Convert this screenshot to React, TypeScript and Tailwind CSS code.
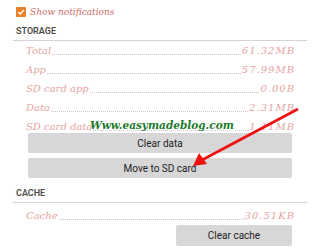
const rows = [
  { label: "Total", value: "61.32MB" },
  { label: "App", value: "57.99MB" },
  { label: "SD card app", value: "0.00B" },
  { label: "Data", value: "2.31MB" },
  { label: "SD card data", value: "1.11MB" },
]

const script = { fontFamily: "'DejaVu Serif', 'Liberation Serif', serif" }

function InfoRow({ label, value }: { label: string; value: string }) {
  return (
    <div className="flex items-center h-[19px] pl-[26px] pr-[25px] text-[10px] italic text-[#e6a3a3]" style={script}>
      <span className="leading-none">{label}</span>
      <span className="flex-1 border-b border-dotted border-[#c8c8c8] mt-[7px] mx-[1px]" />
      <span className="leading-none tracking-[1px]">{value}</span>
    </div>
  )
}

function Heading({ text }: { text: string }) {
  return (
    <div className="px-[13px]">
      <div className="pl-[3px] h-[18px] flex items-center text-[9px] font-semibold text-[#4a4a4a] border-b border-[#d4d4d4]" style={{ fontFamily: "Roboto, sans-serif" }}>
        {text}
      </div>
    </div>
  )
}

export default function App() {
  return (
    <div className="relative w-[320px] h-[252px] bg-white overflow-hidden" style={{ fontFamily: "Roboto, sans-serif" }}>
      {/* notifications checkbox */}
      <div className="flex items-center gap-[4px] pl-[16px] pt-[7px] h-[23px] items-start">
        <div className="w-[10px] h-[10px] bg-[#e8822a] rounded-[1px] flex items-center justify-center">
          <svg viewBox="0 0 10 10" className="w-[8px] h-[8px]">
            <path d="M1.5 5.2 L4 7.5 L8.5 2.5" stroke="white" strokeWidth="1.6" fill="none" />
          </svg>
        </div>
        <span className="text-[9px] leading-[10px] italic text-[#cc6b6b]" style={script}>Show notifications</span>
      </div>

      <Heading text="STORAGE" />
      <div>
        {rows.map((r) => (
          <InfoRow key={r.label} label={r.label} value={r.value} />
        ))}
      </div>

      <div className="flex flex-col gap-[5px] px-[28px] -mt-[3px]">
        <button className="h-[20px] bg-[#d7d7d7] rounded-[2px] text-[10px] text-[#222]">Clear data</button>
        <button className="h-[20px] bg-[#d7d7d7] rounded-[2px] text-[10px] text-[#222]">Move to SD card</button>
      </div>

      <div className="pt-[7px]">
        <Heading text="CACHE" />
      </div>
      <div className="pt-[3px]">
        <InfoRow label="Cache" value="30.51KB" />
      </div>
      <div className="flex justify-end pr-[28px]">
        <button className="w-[116px] h-[21px] bg-[#d7d7d7] rounded-[2px] text-[10px] text-[#222]">Clear cache</button>
      </div>

      {/* watermark */}
      <div
        className="absolute left-[90px] top-[118px] text-[10.5px] font-bold italic text-[#1d7a2c]"
        style={script}
      >
        Www.easymadeblog.com
      </div>

      {/* arrow */}
      <svg className="absolute left-0 top-0 w-[320px] h-[252px] pointer-events-none" viewBox="0 0 320 252">
        <line x1="298" y1="109" x2="202" y2="160" stroke="#f01010" strokeWidth="2.6" />
        <polygon points="193,166 199,153 207,164" fill="#f01010" />
      </svg>
    </div>
  )
}
